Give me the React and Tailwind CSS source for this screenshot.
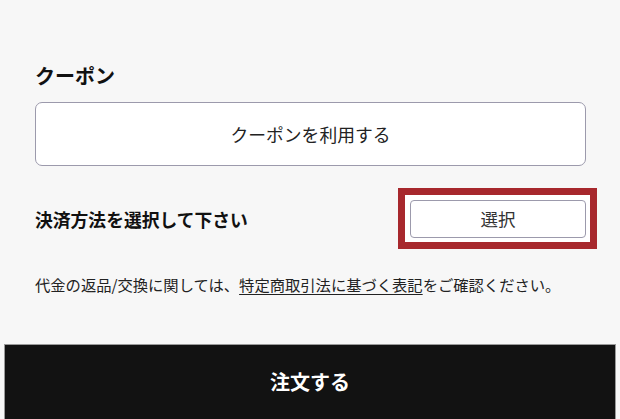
import React from "react";

const App = () => {
  return (
    <div className="min-h-screen bg-[#f7f7f7] text-[#111] font-['Noto_Sans_CJK_JP','Noto_Sans',sans-serif]">
      <div className="pl-[35px] pr-[34px] pt-[62px]">
        <h2 className="text-[20px] leading-[28px] font-bold">クーポン</h2>
        <button
          type="button"
          className="mt-[12px] w-full h-[64px] bg-white border border-[#9c9aac] rounded-[7px] text-[17.8px] text-[#222]"
        >
          クーポンを利用する
        </button>

        <div className="mt-[23px] h-[60px] flex items-center justify-between">
          <p className="text-[17.8px] font-bold">決済方法を選択して下さい</p>
          <div className="relative">
            <div className="absolute -top-[12px] -bottom-[11px] -left-[12px] -right-[11px] bg-white border-[7px] border-[#a7282d]"></div>
            <button
              type="button"
              className="relative z-10 w-[176px] h-[38px] bg-white border border-[#9c9aac] rounded-[4px] text-[17.5px] text-[#333]"
            >
              選択
            </button>
          </div>
        </div>

        <p className="mt-[24px] text-[15.3px] leading-[22px] text-[#222] whitespace-nowrap">
          代金の返品/交換に関しては、
          <span className="underline underline-offset-[3px]">特定商取引法に基づく表記</span>
          をご確認ください。
        </p>
      </div>

      <div className="mt-[49px] mx-[4px] h-[76px] bg-[#121212] border border-[#9a9a9a] flex items-center justify-center">
        <span className="text-white text-[20px] font-bold">注文する</span>
      </div>
    </div>
  );
};

export default App;
